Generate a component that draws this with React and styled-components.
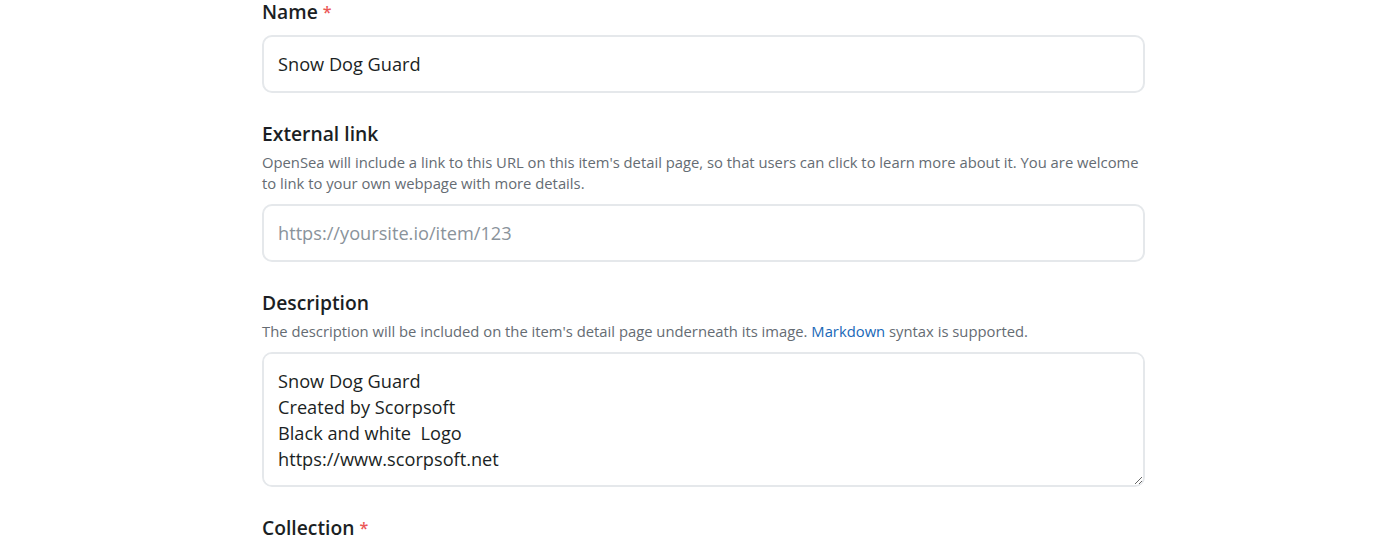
import React from 'react';
import styled, {createGlobalStyle} from 'styled-components';

const GlobalStyle = createGlobalStyle`
    body {
        margin: 0;
        background: #ffffff;
        font-family: "Open Sans", "Noto Sans", sans-serif;
        color: #04111d;
    }
`

const Form = styled.form`
    width: 883px;
    margin: 0 0 0 262px;
    display: flex;
    flex-direction: column;
`

const Field = styled.div`
    display: flex;
    flex-direction: column;
    margin-bottom: 29px;
`

const Label = styled.label`
    font-size: 19.3px;
    font-weight: 600;
    line-height: 24px;
    color: #1b1f24;
`

const Required = styled.span`
    color: #eb5757;
    margin-left: 5px;
    font-size: 16px;
    vertical-align: top;
`

const Hint = styled.p`
    margin: 6px 0 0;
    font-size: 14.8px;
    line-height: 21px;
    color: #656c73;
`

const HintLink = styled.a`
    color: #1868b7;
    text-decoration: none;
`

const Input = styled.input`
    box-sizing: border-box;
    height: 58px;
    margin-top: ${p => p.$gap || 10}px;
    padding: 0 14px;
    border: 2px solid #e5e8eb;
    border-radius: 10px;
    font-family: inherit;
    font-size: 18.2px;
    color: #1b1f24;
    outline: none;

    &::placeholder {
        color: #8a939b;
    }
`

const TextArea = styled.textarea`
    box-sizing: border-box;
    height: 135px;
    margin-top: 10px;
    padding: 14px 14px;
    border: 2px solid #e5e8eb;
    border-radius: 10px;
    font-family: inherit;
    font-size: 18.2px;
    line-height: 26px;
    color: #1b1f24;
    outline: none;
    resize: vertical;
`

const description = `Snow Dog Guard
Created by Scorpsoft
Black and white  Logo
https://www.scorpsoft.net`

export default function App() {
    return (
        <>
            <GlobalStyle />
            <Form>
                <Field>
                    <Label>Name<Required>*</Required></Label>
                    <Input $gap={11} defaultValue="Snow Dog Guard" />
                </Field>
                <Field>
                    <Label>External link</Label>
                    <Hint>
                        OpenSea will include a link to this URL on this item's detail page, so that users can click to learn more about it. You are welcome to link to your own webpage with more details.
                    </Hint>
                    <Input placeholder="https://yoursite.io/item/123" />
                </Field>
                <Field>
                    <Label>Description</Label>
                    <Hint>
                        The description will be included on the item's detail page underneath its image. <HintLink href="#">Markdown</HintLink> syntax is supported.
                    </Hint>
                    <TextArea defaultValue={description} />
                </Field>
                <Field>
                    <Label>Collection<Required>*</Required></Label>
                </Field>
            </Form>
        </>
    )
}
